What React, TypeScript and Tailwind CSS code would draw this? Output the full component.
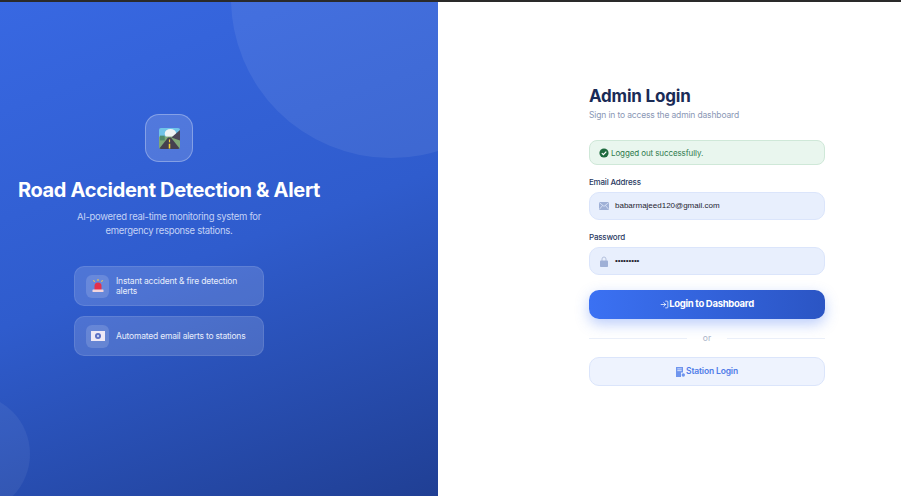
import { LogIn } from "lucide-react"

function RoadIcon() {
  return (
    <svg width="21" height="21" viewBox="0 0 22 22" className="rounded-[2px]">
      <rect width="22" height="11" fill="#6fc3e8" />
      <ellipse cx="12" cy="6" rx="6" ry="5" fill="#eef3f4" />
      <rect y="9" width="22" height="13" fill="#7fa878" />
      <path d="M22 2 L13 10 L22 13 Z" fill="#4a4658" />
      <rect x="1" y="8" width="5" height="5" fill="#4f8a6a" />
      <path d="M9.5 10 L12.5 10 L22 22 L0 22 Z" fill="#45404f" />
      <rect x="10.4" y="12" width="1.2" height="3" fill="#f6d33c" />
      <rect x="10.2" y="16.5" width="1.6" height="5" fill="#f6d33c" />
    </svg>
  )
}

function SirenIcon() {
  return (
    <svg width="14" height="14" viewBox="0 0 14 14">
      <path d="M7 0v2M2.5 1l1 2M11.5 1l-1 2" stroke="#f7c948" strokeWidth="1" />
      <path d="M3.5 11V7a3.5 3.5 0 0 1 7 0v4Z" fill="#e5304a" />
      <rect x="1.5" y="10.5" width="11" height="2.5" rx="0.5" fill="#f3d5dc" />
    </svg>
  )
}

function IdIcon() {
  return (
    <svg width="14" height="10" viewBox="0 0 14 10">
      <rect width="14" height="10" fill="#eee9f6" />
      <circle cx="7" cy="5" r="3" fill="#5a6fc4" />
      <circle cx="7" cy="5" r="1.2" fill="#c3cdf0" />
    </svg>
  )
}

function CheckIcon() {
  return (
    <svg width="10" height="10" viewBox="0 0 10 10" className="shrink-0">
      <circle cx="5" cy="5" r="4.6" fill="#1f6b3f" />
      <path d="M2.8 5.1 4.4 6.7 7.3 3.6" fill="none" stroke="#fff" strokeWidth="1.2" />
    </svg>
  )
}

function MailIcon() {
  return (
    <svg width="10" height="8" viewBox="0 0 10 8" className="shrink-0">
      <rect width="10" height="8" rx="0.8" fill="#9fb0d6" />
      <path d="M0.3 0.6 5 4.4 9.7 0.6M0.3 7.4 3.6 3.4M9.7 7.4 6.4 3.4" fill="none" stroke="#e8effd" strokeWidth="0.7" />
    </svg>
  )
}

function LockIcon() {
  return (
    <svg width="8" height="11" viewBox="0 0 8 11" className="shrink-0">
      <path d="M2 5V3a2 2 0 0 1 4 0v2" fill="none" stroke="#b4c1dd" strokeWidth="1" />
      <rect y="4.5" width="8" height="6.5" rx="0.8" fill="#9fb0d6" />
    </svg>
  )
}

function StationIcon() {
  return (
    <svg width="9" height="10" viewBox="0 0 9 10" fill="#6f95ee" className="shrink-0">
      <path d="M0 0h7v5.5H5V10H0Z" />
      <rect x="1.3" y="1.5" width="4.4" height="0.8" fill="#eef2fe" />
      <rect x="1.3" y="3.3" width="4.4" height="0.8" fill="#eef2fe" />
      <circle cx="7.3" cy="8" r="1.7" />
    </svg>
  )
}

function Feature({ icon, children }: { icon: React.ReactNode; children: React.ReactNode }) {
  return (
    <div className="flex h-10 w-[190px] items-center gap-[7px] rounded-[10px] border border-white/10 bg-white/15 px-[11px]">
      <div className="flex h-[23px] w-[23px] shrink-0 items-center justify-center rounded-md bg-white/15">{icon}</div>
      <p className="text-[8.5px] leading-[10px] tracking-[-0.2px] text-[#e6ecfb]">{children}</p>
    </div>
  )
}

export default function App() {
  return (
    <div className="flex h-[496px] w-[901px] flex-col overflow-hidden bg-white font-['Inter','Liberation_Sans',sans-serif]">
      <div className="h-[2px] shrink-0 bg-[#2a2a2a]" />
      <div className="flex flex-1">
        <div className="relative flex w-[438px] flex-col items-center overflow-hidden bg-[linear-gradient(160deg,#3868e2_0%,#2f5ccd_50%,#203f94_100%)] pt-[112px] pr-[100px]">
          <div className="absolute top-[-164px] left-[231px] h-[320px] w-[320px] rounded-full bg-white/[0.07]" />
          <div className="absolute top-[392px] left-[-90px] h-[120px] w-[120px] rounded-full bg-white/[0.06]" />

          <div className="relative flex h-12 w-12 items-center justify-center rounded-[14px] border border-white/30 bg-white/15">
            <RoadIcon />
          </div>
          <h1 className="relative mt-[15px] text-[20px] leading-[26px] font-bold tracking-[-0.33px] whitespace-nowrap text-white">
            Road Accident Detection &amp; Alert
          </h1>
          <p className="relative mt-[7px] w-[200px] text-center text-[9.5px] leading-[14px] tracking-[-0.3px] text-[#c3d2f6]">
            AI-powered real-time monitoring system for emergency response stations.
          </p>
          <div className="relative mt-[28px] flex flex-col gap-[10px]">
            <Feature icon={<SirenIcon />}>Instant accident &amp; fire detection alerts</Feature>
            <Feature icon={<IdIcon />}>Automated email alerts to stations</Feature>
          </div>
        </div>

        <div className="flex-1 pt-[84px] pl-[151px]">
          <div className="w-[236px]">
            <h2 className="text-[17px] leading-[20px] font-bold tracking-[-0.2px] text-[#1a2b56]">Admin Login</h2>
            <p className="mt-[3px] text-[8.5px] leading-[12px] tracking-[-0.15px] text-[#8a97b5]">Sign in to access the admin dashboard</p>

            <div className="mt-[19px] flex h-[25px] items-center gap-[2px] rounded-lg border border-[#cfe8d8] bg-[#e9f6ee] px-[9px] text-[8px] tracking-[-0.1px] text-[#2f7a4d]">
              <CheckIcon />
              Logged out successfully.
            </div>

            <label className="mt-[12px] block text-[8px] leading-[11px] font-medium tracking-[-0.2px] text-[#2a3a5f]">Email Address</label>
            <div className="mt-[4px] flex h-[28px] items-center rounded-[10px] border border-[#dbe5fb] bg-[#e8effd] pl-[9px]">
              <MailIcon />
              <span className="ml-[6px] font-['Liberation_Sans',sans-serif] text-[8px] text-[#1f2430]">babarmajeed120@gmail.com</span>
            </div>

            <label className="mt-[12px] block text-[8px] leading-[11px] font-medium tracking-[-0.2px] text-[#2a3a5f]">Password</label>
            <div className="mt-[4px] flex h-[28px] items-center rounded-[10px] border border-[#dbe5fb] bg-[#e8effd] pl-[10px]">
              <LockIcon />
              <span className="ml-[7px] font-['Liberation_Sans',sans-serif] text-[8px] leading-[8px] tracking-[-0.1px] text-[#1f2430]">•••••••••</span>
            </div>

            <button className="mt-[15px] flex h-[29px] w-full items-center justify-center rounded-[10px] bg-gradient-to-r from-[#3b71f3] to-[#2b55c4] text-[9.5px] font-bold tracking-[-0.3px] text-white shadow-[0_5px_14px_rgba(59,113,243,0.35)]">
              <LogIn size={9} />
              Login to Dashboard
            </button>

            <div className="mt-[13px] flex items-center">
              <div className="h-px flex-1 bg-[#eaeff9]" />
              <span className="px-[16px] text-[8.5px] leading-[12px] text-[#aab4c8]">or</span>
              <div className="h-px flex-1 bg-[#eaeff9]" />
            </div>

            <button className="mt-[13px] flex h-[29px] w-full items-center justify-center gap-[1px] rounded-[10px] border border-[#dbe5fb] bg-[#eef3fe] text-[8.5px] font-semibold tracking-[-0.15px] text-[#4f7ce8]">
              <StationIcon />
              Station Login
            </button>
          </div>
        </div>
      </div>
    </div>
  )
}
